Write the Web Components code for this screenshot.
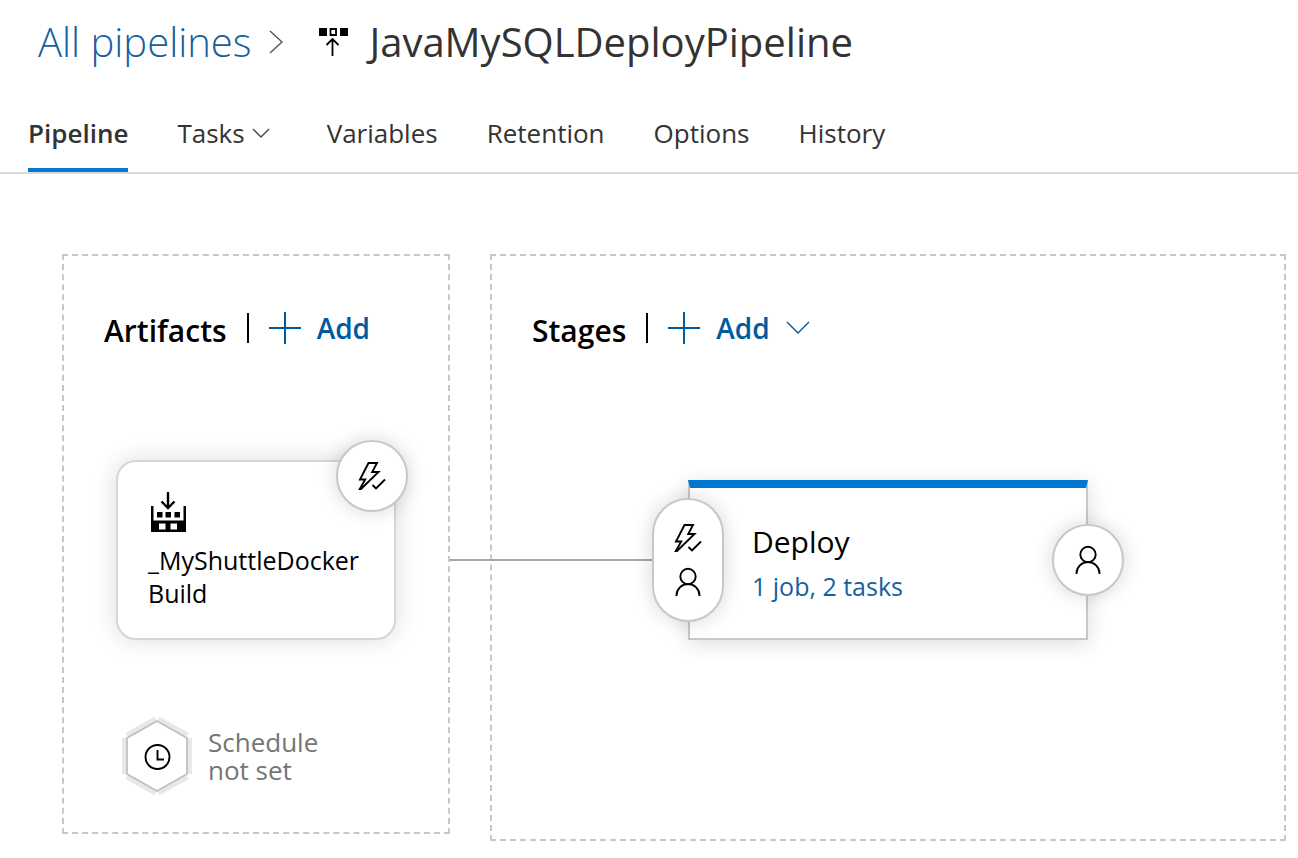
<!DOCTYPE html>
<html lang="en">
<head>
<meta charset="utf-8">
<title>JavaMySQLDeployPipeline</title>
<style>
  body { margin: 0; background: #fff; color: #333; font-family: "Open Sans", "Noto Sans", sans-serif; }
</style>
</head>
<body>
<release-editor></release-editor>

<template id="release-editor">
  <style>
    :host { display: block; }
    .canvas { display: flex; align-items: flex-start; gap: 40px; padding: 80px 12px 16px 62px; }
    canvas-panel.artifacts { flex: 0 0 388px; }
    canvas-panel.stages { flex: 1; }
    .artifacts artifact-card { margin: 100px 0 0 52px; }
    .artifacts schedule-node { margin: 76px 0 36px 58px; }
    .stage-row { display: flex; align-items: center; margin: 120px 0 199px -42px; }
    .connector { flex: 0 0 238px; height: 2px; background: #a6a6a6; }
  </style>
  <header>
    <bread-crumb></bread-crumb>
    <tab-bar></tab-bar>
  </header>
  <main class="canvas">
    <canvas-panel class="artifacts">
      <span slot="title">Artifacts</span>
      <add-button slot="action">Add</add-button>
      <artifact-card>_MyShuttleDocker Build</artifact-card>
      <schedule-node>Schedule not set</schedule-node>
    </canvas-panel>
    <canvas-panel class="stages">
      <span slot="title">Stages</span>
      <add-button slot="action" menu>Add</add-button>
      <div class="stage-row">
        <div class="connector"></div>
        <stage-card>Deploy<span slot="summary">1 job, 2 tasks</span></stage-card>
      </div>
    </canvas-panel>
  </main>
</template>

<template id="bread-crumb">
  <style>
    :host { display: flex; align-items: center; padding: 14px 38px 0; font-size: 40px; line-height: 56px; white-space: nowrap; }
    a { color: #175f9f; font-weight: 300; text-decoration: none; }
    h1 { margin: 0 0 0 20px; font: inherit; color: #333; }
    .sep { margin: 0 36px 0 18px; }
  </style>
  <a href="#pipelines">All pipelines</a>
  <ui-icon class="sep" name="chevron-right"></ui-icon>
  <ui-icon name="release"></ui-icon>
  <h1>JavaMySQLDeployPipeline</h1>
</template>

<template id="tab-bar">
  <style>
    :host { display: block; border-bottom: 2px solid #dadada; }
    nav { display: flex; gap: 49px; padding: 28px 28px 0; }
    a { display: flex; align-items: center; height: 70px; border-bottom: 4px solid transparent; color: #333;
        font-size: 26px; line-height: 36px; text-decoration: none; white-space: nowrap; }
    a[aria-current] { font-weight: 600; border-color: #0078d4; }
    ui-icon { margin: 0 8px 0 7px; }
  </style>
  <nav aria-label="Pipeline sections">
    <a href="#pipeline" aria-current="page">Pipeline</a>
    <a href="#tasks">Tasks<ui-icon name="chevron-small"></ui-icon></a>
    <a href="#variables">Variables</a>
    <a href="#retention">Retention</a>
    <a href="#options">Options</a>
    <a href="#history">History</a>
  </nav>
</template>

<template id="canvas-panel">
  <style>
    :host { display: block; box-sizing: border-box; border: 2px dashed #c8c8c8; }
    header { display: flex; align-items: center; height: 48px; padding: 48px 0 8px 40px; }
    h2 { margin: 6px 20px 0 0; color: #000; font-size: 30px; line-height: 48px; font-weight: 600; }
    .bar { width: 2px; height: 30px; margin-right: 20px; background: #000; }
  </style>
  <header>
    <h2><slot name="title"></slot></h2>
    <span class="bar"></span>
    <slot name="action"></slot>
  </header>
  <slot></slot>
</template>

<template id="add-button">
  <style>
    :host { display: block; }
    button { display: flex; align-items: center; gap: 16px; padding: 0; border: 0; background: none; color: #005a9e;
             font-family: inherit; font-size: 28px; line-height: 48px; font-weight: 600; }
    .caret { display: none; }
    :host([menu]) .caret { display: block; }
  </style>
  <button type="button">
    <ui-icon name="plus"></ui-icon>
    <slot></slot>
    <ui-icon class="caret" name="chevron-down"></ui-icon>
  </button>
</template>

<template id="round-button">
  <style>
    :host { display: block; }
    button { display: flex; flex-direction: column; align-items: center; justify-content: center; gap: 8px; box-sizing: border-box;
             width: 72px; min-height: 72px; padding: 16px 0; border: 2px solid #c8c8c8; border-radius: 36px;
             background: #fff; color: #000; box-shadow: 0 0 20px rgba(0, 0, 0, .16); }
    :host([tall]) button { padding: 20px 0; }
  </style>
  <button type="button"><slot></slot></button>
</template>

<template id="artifact-card">
  <style>
    :host { display: block; position: relative; box-sizing: border-box; width: 280px; height: 180px; padding: 30px 32px 0 30px;
            border: 2px solid #d6d6d6; border-radius: 20px; background: #fff; color: #000;
            box-shadow: 0 0 24px rgba(0, 0, 0, .14); }
    p { margin: 12px 0 0; font-size: 25px; line-height: 33px; }
    round-button { position: absolute; top: -22px; right: -14px; }
  </style>
  <ui-icon name="build"></ui-icon>
  <p><slot></slot></p>
  <round-button label="Continuous deployment trigger"><ui-icon name="trigger"></ui-icon></round-button>
</template>

<template id="schedule-node">
  <style>
    :host { display: flex; align-items: center; gap: 16px; color: #757575; font-size: 26px; line-height: 28px; }
    div { width: 130px; }
  </style>
  <ui-icon name="schedule"></ui-icon>
  <div><slot></slot></div>
</template>

<template id="stage-card">
  <style>
    :host { display: block; position: relative; box-sizing: border-box; width: 400px; height: 160px; padding: 32px 36px 0 62px;
            border: 2px solid #c8c8c8; border-top: 8px solid #0078d4; background: #fff;
            box-shadow: 0 4px 20px rgba(0, 0, 0, .14); }
    h3 { margin: 0; color: #000; font-size: 30px; line-height: 44px; font-weight: 400; }
    a { display: block; color: #175f9f; font-size: 25px; line-height: 44px; text-decoration: none; }
    .pre, .post { position: absolute; }
    .pre { left: -38px; top: 10px; }
    .post { right: -38px; top: 36px; }
  </style>
  <h3><slot></slot></h3>
  <a href="#deploy"><slot name="summary"></slot></a>
  <round-button class="pre" tall label="Pre-deployment conditions"><ui-icon name="trigger"></ui-icon><ui-icon name="person"></ui-icon></round-button>
  <round-button class="post" label="Post-deployment conditions"><ui-icon name="person"></ui-icon></round-button>
</template>

<script>
  const icons = {
    'chevron-right': [14, 26, '<path d="M1 2L13 13L1 24" stroke="#555" stroke-width="1.4"/>'],
    'chevron-small': [18, 12, '<path d="M1 2L9 10L17 2" stroke="#444" stroke-width="1.4"/>'],
    'chevron-down': [24, 14, '<path d="M1 1L12 12L23 1" stroke-width="1.4"/>'],
    'plus': [32, 32, '<path d="M0 16H32M16 0V32" stroke-width="2"/>'],
    'release': [30, 30, '<path d="M0 1h8v8H0zM21 1h8v8h-8z" fill="#000" stroke="none"/><path d="M11.500 2h5.500v6h-5.500zM13.500 11.500V29M7.500 18L13.500 12L19.500 18" stroke="#000" stroke-width="1.800"/>'],
    'build': [38, 40, '<path fill="currentColor" stroke="none" fill-rule="evenodd" d="M3 14h2.500v14.500H35.500V14H38v26H3zM11 31.500v6h6.500v-6zM22.500 31.500v6h6.500v-6zM9 20h5.500v5.500H9zM17.500 20H23v5.500h-5.500zM26.500 20H32v5.500h-5.500z"/><path d="M20 0V15M13.500 9.500L20 16L26.500 9.500" stroke-width="2.400"/>'],
    'trigger': [36, 36, '<path d="M14.500 5H23L18.200 14H24.500L7 31H5.800L11.200 21.500H6Z" stroke-width="1.900"/><path d="M18.500 27L22 30.500L31 21.500" stroke-width="1.900"/>'],
    'person': [36, 36, '<circle cx="18" cy="12.500" r="7.700" stroke-width="1.900"/><path d="M6.500 32V31.500a11.500 11.500 0 0 1 23 0V32" stroke-width="1.900"/>'],
    'schedule': [70, 80, '<path d="M4.500 19L33.500 2.500M36.500 2.500L65.500 19M68 22V58M65.500 61L36.500 77.500M33.500 77.500L4.500 61M2 58V22" stroke="#e8e8e8" stroke-width="4.500"/><path d="M35 5L65 22V58L35 75L5 58V22Z" fill="#fff" stroke="#c0c0c0" stroke-width="1.800"/><circle cx="35.500" cy="41" r="12" stroke="#000" stroke-width="1.900"/><path d="M35.500 34V43.500H42" stroke="#000" stroke-width="1.900"/>']
  };

  const define = (name, setup) => customElements.define(name, class extends HTMLElement {
    constructor() {
      super();
      this.attachShadow({ mode: 'open' }).append(document.getElementById(name).content.cloneNode(true));
    }
    connectedCallback() { if (setup) setup(this); }
  });

  customElements.define('ui-icon', class extends HTMLElement {
    connectedCallback() {
      if (this.shadowRoot) return;
      const [w, h, body] = icons[this.getAttribute('name')];
      this.attachShadow({ mode: 'open' }).innerHTML =
        `<style>:host{display:block;flex:none}svg{display:block}</style>
         <svg width="${w}" height="${h}" viewBox="0 0 ${w} ${h}" fill="none" stroke="currentColor" aria-hidden="true">${body}</svg>`;
    }
  });
  define('round-button', el => el.shadowRoot.querySelector('button').setAttribute('aria-label', el.getAttribute('label')));
  ['bread-crumb', 'tab-bar', 'add-button', 'canvas-panel', 'artifact-card', 'schedule-node', 'stage-card', 'release-editor'].forEach(n => define(n));
</script>
</body>
</html>
